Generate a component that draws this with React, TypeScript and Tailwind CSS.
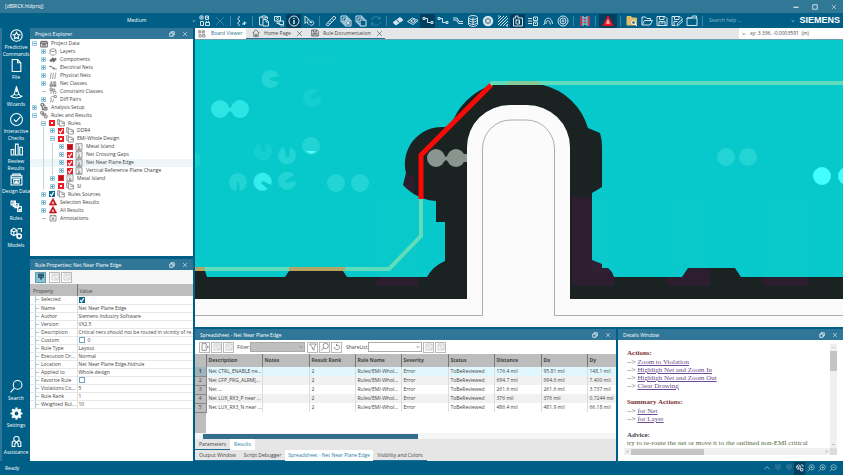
import type { ReactNode } from 'react'
import { clsx } from 'clsx'

const ICONS: Record<string, ReactNode> = {
  parts: <path d="M2 2h6v6H2zM13 2h6v7h-6zM3 13h6v8H3zM13 15h8v6h-8zM4 5h2M15 5h3M15 12v3M19 12v3" />,
  close: <path d="M4 4l16 16M20 4L4 20" />,
  squiggle: <path d="M6 2v3l-3 3 5 4-5 4 3 3v3M14 16h7M17 13v7M12 18h4" />,
  clipboard: <path d="M8 4H3v16h6M16 4h3v4M8 2h8v4H8zM10 9h7l4 4v9H10zM16 9v5h5" />,
  layersearch: <path d="M3 3h12v9H3zM7 7a2 2 0 1 0 4 0 2 2 0 1 0-4 0M8 12v5h5M12 12h9v7h-9zM18 18l4 4M15 22h4" />,
  info: (
    <>
      <circle cx="12" cy="12" r="10" />
      <path d="M12 10v8M12 6v2" strokeWidth="3" />
    </>
  ),
  pick: <path d="M4 2v15l4-4 3 6M4 2l9 8H8M15 13c5-3 8 2 6 5s-6 4-7 1M14 11v4h4" />,
  ruler: <path d="M2 19L18 2l4 4L6 22zM14 7l3 3M10 11l3 3M6 15l3 3" />,
  copyx: <path d="M2 2h12v12H2zM6 6h12v12H6zM10 10h12v12H10zM13 13l6 6M19 13l-6 6" />,
  copy: <path d="M2 2h12v5M2 2v12h5M6 6h12v5M6 6v12h5M10 10h12v12H10z" />,
  refresh: <path d="M3 10C4 3 17 1 20 8V3M20 8h-5M21 14c-2 8-15 9-18 2v5M3 16h5" />,
  eraser: (
    <>
      <path d="M2 15L16 5l6 5L8 20z" fill="currentColor" />
      <path d="M9 10l6 5" stroke="#005f87" />
    </>
  ),
  plane: <path d="M1 13l10-7 11 5-10 8zM7 12l6-3 4 3-5 3z" />,
  net: <path d="M2 5h4v4H2zM6 7h5v8h7M18 13h4v4h-4z" />,
  trace: <path d="M2 6h8l4 7h8M2 10h7l4 7h9" />,
  stack: (
    <>
      <ellipse cx="12" cy="5" rx="9" ry="4" />
      <path d="M3 5v14c2 5 16 5 18 0V5M3 10c2 5 16 5 18 0M3 15c2 5 16 5 18 0M12 5v15" />
    </>
  ),
  via: (
    <>
      <circle cx="12" cy="12" r="8" strokeWidth="5" />
      <circle cx="12" cy="12" r="4" fill="#f0d8c8" stroke="#8fa6ae" />
    </>
  ),
  hatch: <path d="M2 8l6-6M2 14L14 2M2 20L20 2M6 22L22 6M12 22l10-10M18 22l4-4M2 2h3M19 22h3" />,
  label: <path d="M3 6h4V2h5v4h9v16H3zM8 18V9M8 10h7v8H9M12 14h3" />,
  pins: <path d="M2 7h8M2 12h8M2 17h8M13 4h8v7h-8zM13 14h8v7h-8zM16 7h2M16 17h2" />,
  arc: <path d="M3 20c4-1 1-11 6-13s11 0 12 11M8 18c0-7 5-8 7-5s0 5 3 6" />,
  target: (
    <>
      <circle cx="12" cy="12" r="10" />
      <circle cx="12" cy="12" r="6" />
      <circle cx="12" cy="12" r="2" />
    </>
  ),
  redstack: (
    <>
      <path d="M8 2v20M16 2v20M8 6h8M8 12h8M8 18h8" stroke="#c9dbe4" />
      <path d="M4 2v20M20 2v20" stroke="#e2364a" strokeWidth="3" />
      <path d="M9 9h6M9 15h6" stroke="#e2364a" />
    </>
  ),
  warn: (
    <>
      <path d="M12 2l10 19H2z" fill="#e21322" stroke="#e21322" />
      <path d="M12 8l4 9H8z" fill="#fff" stroke="none" />
      <path d="M12 12v3" stroke="#e21322" />
    </>
  ),
  foldersearch: (
    <>
      <path d="M2 3h8l2 3h9v14H2z" fill="#e2bd67" stroke="#e2bd67" />
      <circle cx="15" cy="15" r="4" stroke="#fff" fill="#52798c" />
      <path d="M18 18l4 4" stroke="#fff" />
    </>
  ),
  open: <path d="M2 20V4h7l3 3h7v4M2 20l5-9h16l-5 9z" />,
  save: <path d="M2 3h16l4 4v14H2zM7 3v6h9V3M6 21v-8h12v8M9 16h6" />,
  saveas: <path d="M2 3h16l4 4v3M2 3v18h7M7 3v6h9V3M6 21v-8h7M12 22l1-5 8-7 2 3-8 7z" />,
  folder: <path d="M2 21V6h20v15zM2 6h9l2-4h8v4" />,
  star: (
    <>
      <circle cx="12" cy="12" r="10.5" />
      <path d="M12 6l2 4 4 .6-3 3 .8 4.2L12 16l-3.800 1.800.8-4.200-3-3 4-.6z" />
    </>
  ),
  file: <path d="M4 1h10l6 6v16H4zM14 1v6h6" />,
  wizard: <path d="M2 19c3-1 5-2 6-5l4-13 4 13c1 3 3 4 6 5-5 4-15 4-20 0zM8 15c2 2 6 2 8 0M12 6v5" />,
  check: (
    <>
      <circle cx="12" cy="12" r="11" />
      <path d="M7 12l4 4 8-9" />
    </>
  ),
  chart: <path d="M2 22V12h5v10zM10 22V2h5v20zM18 22V8h5v14z" />,
  data: <path d="M2 5h20v17H2zM2 9h20M5 5V2h14v3M7 12h10v7H7zM10 15h4M10 19v-2h4v2" />,
  rules: <path d="M2 2h8v7H2zM6 9v3h5M9 7h7v7H9zM16 12h5v9h-7v-7M4 5l2 2 3-4M11 10l2 2 3-3M16 17l2 2 3-3" />,
  gearsmall: (
    <>
      <path d="M2 6l5-4 6 4v7l-6 3-5-3zM2 6l5 3 6-3M7 9v7M14 3h7v6" />
      <circle cx="17" cy="17" r="4" strokeWidth="3" />
    </>
  ),
  search: (
    <>
      <circle cx="14" cy="9" r="8" />
      <path d="M8 15l-7 8" />
    </>
  ),
  gear: (
    <>
      <circle cx="12" cy="12" r="6" strokeWidth="5" />
      <path d="M12 1v5M12 18v5M1 12h5M18 12h5M4 4l4 4M16 16l4 4M20 4l-4 4M8 16l-4 4" strokeWidth="4" />
    </>
  ),
  person: <path d="M8 12C2 2 22 2 16 12l4 3v8h-5v-5l-3-3-3 3v5H4v-8zM8 12l4 3 4-3" />,
  // small monochrome glyphs of the explorer tree
  project: <path d="M2 5h20v16H2zM2 10h20M6 2v6M12 2v6M18 2v6M6 14h12M6 18h12" strokeWidth="3" />,
  layers: <path d="M3 6c4-5 14-5 18 0v11c-4 6-14 6-18 0zM3 7c4 5 14 5 18 0" />,
  chip: <path d="M2 14l9-9 4 3-8 9zM11 13l8-7 3 4-9 9z" fill="currentColor" />,
  nets: <path d="M1 7h6l4 6h5M15 10v7M19 15h4" strokeWidth="3" />,
  phys: <path d="M3 21c3-5 0-8 3-13V2M10 21c3-5 0-8 3-13V2M17 21c3-5 0-8 3-13V2" />,
  classes: <path d="M4 21V10l4-6v17M12 21V10l4-6v17M20 21V4M2 16h20" />,
  constraint: <path d="M3 3h6v7H3zM6 10v10M11 6h6v7h-6zM14 13v8M18 12l4 4-4 5" />,
  diff: <path d="M3 21c5 0 3-5 3-11 0-5 3-6 8-6M9 21c4 0 4-4 4-8M15 2h7v6h-7z" />,
  analysis: <path d="M3 2h8v7H3zM7 9v11h5M12 13h9v8h-9zM15 16l4 3M11 5l6 4" strokeWidth="3" />,
  pages: <path d="M7 6V2H2v14h5M7 6h8l2 3h5v12H7zM13 13h9" />,
  rule: <path d="M3 2h18v20H3zM7 6h6M8 10l8 8M16 9l-5 5v5M7 19h10" />,
  note: <path d="M3 5h18v16H3zM7 2v6M17 2v6M8 17l4-7 4 7M9 15h6" />,
  alert: (
    <>
      <path d="M12 1l11 20H1z" fill="#c3151f" stroke="#c3151f" />
      <path d="M8 17l4-8 4 8z" fill="#f5dcdc" stroke="none" />
    </>
  ),
  esp: <path d="M3 3h18M3 8h18M4 13h16M9 18h6M6 3v10M12 3v15M18 3v10" strokeWidth="3" />,
  tree: <path d="M3 3h18v18H3zM7 8h10M7 12h4M13 16h5M12 12v4" />,
  export: <path d="M16 8V2H3v20h13v-6M12 12h10M18 8l4 4-4 4" />,
  funnel: <path d="M2 3h20l-7 10v8l-5-3v-5z" />,
  undo: <path d="M4 12c0 10 16 10 16 1 0-5-4-7-11-7M13 2L9 6l4 4" />,
  home: <path d="M2 12L12 2l10 10M5 10v12h14V10M10 22v-6h4v6" />,
  restore: <path d="M3 8h13v13H3zM8 8V3h13v13h-5" strokeWidth="3" />,
  up: <path d="M4 16l8-8 8 8" />,
  down: <path d="M4 8l8 8 8-8" strokeWidth="4" />,
  zoomin: (
    <>
      <circle cx="14" cy="10" r="8" />
      <path d="M8 16l-6 6M14 6v8M10 10h8" />
    </>
  ),
  zoomout: (
    <>
      <circle cx="14" cy="10" r="8" />
      <path d="M8 16l-6 6M10 10h8" />
    </>
  ),
  square: <path d="M3 3h18v18H3z" strokeWidth="3" />,
  minus: <path d="M2 13h20" strokeWidth="4" />,
}

const Icon = ({ name, className = 'size-[11px]' }: { name: string; className?: string }) => (
  <svg
    viewBox="0 0 24 24"
    fill="none"
    stroke="currentColor"
    strokeWidth="2"
    className={clsx('shrink-0', className)}
    aria-hidden="true"
  >
    {ICONS[name]}
  </svg>
)

interface Tool {
  icon: string
  dim?: boolean
  active?: boolean
}

const TOOLS: (Tool | null)[] = [
  { icon: 'parts' },
  { icon: 'close', dim: true },
  null,
  { icon: 'squiggle' },
  null,
  { icon: 'clipboard' },
  { icon: 'layersearch' },
  { icon: 'info', active: true },
  { icon: 'pick' },
  null,
  { icon: 'ruler' },
  { icon: 'copyx' },
  { icon: 'copy' },
  { icon: 'refresh', dim: true },
  null,
  { icon: 'eraser' },
  { icon: 'plane' },
  { icon: 'net', active: true },
  { icon: 'net' },
  { icon: 'trace' },
  { icon: 'stack' },
  { icon: 'via' },
  { icon: 'hatch' },
  { icon: 'label', active: true },
  { icon: 'pins' },
  { icon: 'arc' },
  { icon: 'target' },
  null,
  { icon: 'redstack' },
  null,
  { icon: 'warn', active: true },
  null,
  { icon: 'foldersearch' },
  { icon: 'open' },
  { icon: 'save' },
  { icon: 'saveas' },
  { icon: 'folder' },
  null,
]

const NAV = [
  { icon: 'star', label: ['Predictive', 'Commands'] },
  { icon: 'file', label: ['File'] },
  { icon: 'wizard', label: ['Wizards'] },
  { icon: 'check', label: ['Interactive', 'Checks'] },
  { icon: 'chart', label: ['Review', 'Results'] },
  { icon: 'data', label: ['Design Data'] },
  { icon: 'rules', label: ['Rules'] },
  { icon: 'gearsmall', label: ['Models'] },
]

const NAV_BOTTOM = [
  { icon: 'search', label: ['Search'] },
  { icon: 'gear', label: ['Settings'] },
  { icon: 'person', label: ['Assistance'] },
]

type Check = 'on' | 'mixed' | 'full' | 'blue'

interface TreeItem {
  level: number
  icon: string
  text: string
  sign?: '+' | '-'
  check?: Check
  selected?: boolean
}

const TREE: TreeItem[] = [
  { level: 0, icon: 'project', text: 'Project Data', sign: '-' },
  { level: 1, icon: 'layers', text: 'Layers', sign: '+' },
  { level: 1, icon: 'chip', text: 'Components', sign: '+' },
  { level: 1, icon: 'nets', text: 'Electrical Nets', sign: '+' },
  { level: 1, icon: 'phys', text: 'Physical Nets', sign: '+' },
  { level: 1, icon: 'classes', text: 'Net Classes', sign: '+' },
  { level: 1, icon: 'constraint', text: 'Constraint Classes' },
  { level: 1, icon: 'diff', text: 'Diff Pairs', sign: '+' },
  { level: 0, icon: 'analysis', text: 'Analysis Setup', sign: '+' },
  { level: 0, icon: 'rules', text: 'Rules and Results', sign: '-' },
  { level: 1, icon: 'pages', text: 'Rules', sign: '-', check: 'mixed' },
  { level: 2, icon: 'pages', text: 'DDR4', sign: '+', check: 'on' },
  { level: 2, icon: 'pages', text: 'EMI-Whole Design', sign: '-', check: 'mixed' },
  { level: 3, icon: 'rule', text: 'Metal Island', sign: '+', check: 'full' },
  { level: 3, icon: 'rule', text: 'Net Crossing Gaps', sign: '+', check: 'on' },
  { level: 3, icon: 'rule', text: 'Net Near Plane Edge', sign: '+', check: 'on', selected: true },
  { level: 3, icon: 'rule', text: 'Vertical Reference Plane Change', sign: '+', check: 'on' },
  { level: 2, icon: 'rule', text: 'Metal Island', sign: '+', check: 'full' },
  { level: 2, icon: 'pages', text: 'SI', sign: '+', check: 'mixed' },
  { level: 1, icon: 'pages', text: 'Rules Sources', sign: '+', check: 'blue' },
  { level: 1, icon: 'alert', text: 'Selection Results', sign: '+' },
  { level: 1, icon: 'alert', text: 'All Results', sign: '+' },
  { level: 1, icon: 'note', text: 'Annotations' },
]

const PROPERTIES: { name: string; value: string; box?: 'on' | 'off' }[] = [
  { name: 'Selected', value: '', box: 'on' },
  { name: 'Name', value: 'Net Near Plane Edge' },
  { name: 'Author', value: 'Siemens Industry Software' },
  { name: 'Version', value: 'VX2.5' },
  { name: 'Description', value: 'Critical nets should not be routed in vicinity of re...' },
  { name: 'Custom', value: '0', box: 'off' },
  { name: 'Rule Type', value: 'Layout' },
  { name: 'Execution Or...', value: 'Normal' },
  { name: 'Location', value: 'Net Near Plane Edge.hldrule' },
  { name: 'Applied to', value: 'Whole design' },
  { name: 'Favorite Rule', value: '', box: 'off' },
  { name: 'Violations Co...', value: '5' },
  { name: 'Rule Rank', value: '1' },
  { name: 'Weighted Rul...', value: '10' },
]

const COLUMNS = ['Description', 'Notes', 'Result Rank', 'Rule Name', 'Severity', 'Status', 'Distance', 'Dx', 'Dy']

const ROWS = [
  ['Net CTRL_ENABLE ne...', '176.4 mil', '95.81 mil', '148.1 mil'],
  ['Net CFP_PRG_ALRM[...', '694.7 mil', '694.6 mil', '7.400 mil'],
  ['Net ...', '261.6 mil', '261.6 mil', '3.737 mil'],
  ['Net LUX_RX3_P near ...', '376 mil', '376 mil', '0.7244 mil'],
  ['Net LUX_RX3_N near ...', '486.4 mil', '481.9 mil', '66.18 mil'],
]

const NavButton = ({ icon, label }: { icon: string; label: string[] }) => (
  <button
    className={clsx(
      'flex w-full shrink-0 flex-col items-center whitespace-nowrap text-[5px] leading-[7px] text-white',
      label.length > 1 ? 'h-[30px]' : 'h-[27px]',
    )}
  >
    <Icon name={icon} className="mb-[2px] size-[13px]" />
    {label.map((line) => (
      <span key={line}>{line}</span>
    ))}
  </button>
)

const PanelHeader = ({ title }: { title: string }) => (
  <header className="flex h-[11px] shrink-0 items-center bg-[#2f7698] px-[5px] pt-px text-white">
    <h2 className="flex-1 truncate">{title}</h2>
    <button aria-label="Restore" className="mr-[7px]">
      <Icon name="restore" className="size-[6px]" />
    </button>
    <button aria-label="Close">
      <Icon name="close" className="size-[6px]" />
    </button>
  </header>
)

const CheckBox = ({ kind, label }: { kind: Check | 'off'; label: string }) => (
  <span className="relative flex size-[6px] shrink-0">
    <input
      type="checkbox"
      aria-label={label}
      defaultChecked={kind !== 'off'}
      className={clsx(
        'size-[6px] appearance-none border',
        kind === 'off' && 'border-[#6aa5c0] bg-white',
        kind === 'blue' && 'border-[#0a6590] bg-[#0a6590]',
        kind === 'full' && 'border-[#e8232e] bg-[#b8101a]',
        kind === 'on' && 'border-[#ee1a26] bg-[#ee1a26]',
        kind === 'mixed' && 'border-2 border-[#ee1a26] bg-white',
      )}
    />
    {(kind === 'on' || kind === 'blue') && (
      <svg viewBox="0 0 10 10" className="pointer-events-none absolute inset-0" aria-hidden="true">
        <path d="M2 5l2 3 4-6" fill="none" stroke="#fff" strokeWidth="2" />
      </svg>
    )}
  </span>
)

const TreeRow = ({ level, icon, text, sign, check, selected }: TreeItem) => (
  <li className={clsx('flex min-h-0 items-center', selected && 'bg-[#eef5f8]')}>
    {Array.from({ length: level }, (_, i) => (
      <span key={i} className="flex h-full w-[9px] shrink-0 justify-center">
        {i > 0 && <span className="h-full w-px bg-[#bcd7e2]" />}
      </span>
    ))}
    <span className="flex w-[9px] shrink-0 items-center justify-center">
      {sign ? (
        <button aria-label={sign === '+' ? 'Expand' : 'Collapse'} className="text-[#5fa6c4]">
          <svg viewBox="0 0 5 5" className="size-[5px]" fill="none" stroke="currentColor">
            <path d="M.5.5h4v4h-4z" strokeOpacity=".6" />
            <path d="M1 2.500h3" />
            {sign === '+' && <path d="M2.500 1v3" />}
          </svg>
        </button>
      ) : (
        <span className="h-px w-[4px] bg-[#9fc3d2]" />
      )}
    </span>
    {check && (
      <span className="flex w-[8px] shrink-0 justify-center">
        <CheckBox kind={check} label={text} />
      </span>
    )}
    <span className="flex w-[10px] shrink-0 justify-center text-[#666]">
      <Icon name={icon} className="size-[8px]" />
    </span>
    <span className="ml-[2px] whitespace-nowrap">{text}</span>
  </li>
)

const ToolButton = ({ icon, dim, active, label }: Tool & { label: string }) => (
  <button
    aria-label={label}
    className={clsx(
      'flex h-[11px] w-[11px] shrink-0 items-center justify-center border',
      active ? 'border-[#5f9fb5] bg-[#8cc3d3] text-[#1d4a5c]' : 'border-[#b9b9b9] bg-white',
      !active && (dim ? 'text-[#b0b0b0]' : 'text-[#666]'),
    )}
  >
    <Icon name={icon} className="size-[8px]" />
  </button>
)

const BoardCanvas = () => (
  <svg
    viewBox="1 0 648 287"
    preserveAspectRatio="xMidYMid slice"
    className="block min-h-0 w-full flex-1 bg-[#fbfbfb]"
    role="img"
    aria-label="Board layout"
  >
    <path
      d="M0 0H649V259H376V107A43 42 0 0 0 333 65H316A43 42 0 0 0 273 107V259H0Z"
      fill="#1b2222"
    />
    <path
      d="M378 157h20v63l10 4 6 4 6 9v9h-42zM473 237h15l6-9h22v18h-43zM569 237h45v9h-45zM186 237h38v9h-44zM212 133l8 4v17l-10-8z"
      fill="#2c1e30"
    />
    <path
      d="M0 0H649V237H547L541 228H494L488 237H420Q418 231 414 228H408V224L398 220V153L408 147V107Q408 99 406 93L394 88A62 62 0 0 0 349 45H299A62 62 0 0 0 257 86L250 87A37 37 0 0 0 212 133L209 145A50 50 0 0 0 242 161V182H251V221Q239 226 233 237H153L149 231H95L91 237H13L11 231H0Z"
      fill="#07c9cb"
    />
    <g fill="#fff" opacity=".015">
      <path d="M180 158h46v78h-46zM398 158h20v74h-20zM474 158h40v70h-40zM570 158h44v79h-44zM110 12h32v12h-32z" />
    </g>
    <g fill="#2ce5e4">
      <circle cx="26" cy="69" r="9" />
      <circle cx="46" cy="69" r="9" />
      <path d="M32 65l4 3 4-3v8l-4-2-4 2z" />
    </g>
    <g fill="#40dfde" opacity=".5">
      <path d="M85 36A9 9 0 1 0 85 42L76 40V38z" />
      <path d="M90 107A9 9 0 1 0 96 107L95 117H92z" />
      <path d="M42 151A9 9 0 1 1 46 151L45 142H43z" />
      <path d="M100 135A9 9 0 1 0 102 141L92 143 91 141z" />
      <circle cx="117" cy="106" r="9" />
      <circle cx="142" cy="143" r="9" />
      <circle cx="166" cy="143" r="9" />
      <circle cx="532" cy="117" r="9" />
      <circle cx="554" cy="117" r="9" />
    </g>
    <g fill="#40dfde" opacity=".25">
      <path d="M66 103A9 9 0 1 0 72 103L71 112H68z" />
      <path d="M124 51A9 9 0 1 0 127 56L117 59 116 57z" />
      <circle cx="-2" cy="120" r="9" />
    </g>
    <path d="M112 111h10q-5 5-10 0z" fill="#5ff" />
    <path d="M74 149A9 9 0 1 1 77 145L69 141 67 143z" fill="#35ebeb" />
    <circle cx="628" cy="136" r="9" fill="#43ffff" />
    <circle cx="653" cy="136" r="9" fill="#43ffff" />
    <g fill="none" strokeWidth="4">
      <path d="M0 229H195L227 196V158M295 46l3-3H649" stroke="#5fdcb9" />
      <path d="M0 229H11M95 229H151" stroke="#b4a765" />
      <path d="M314 43H346" stroke="#86c898" />
      <path d="M227 159V115L297 45" stroke="#f90a06" strokeWidth="5" />
    </g>
    <g fill="#8a958f">
      <circle cx="242" cy="118" r="9" />
      <circle cx="262" cy="118" r="9" />
      <path d="M248 114l4 3 4-3v9l-4-3-4 3zM266 114h7v8h-7z" />
    </g>
    <path
      d="M0 275.500H288.500V109A28 29 0 0 1 317 80H332A28 29 0 0 1 360.500 109V275.500H649"
      fill="none"
      stroke="#999"
      strokeWidth=".8"
    />
  </svg>
)

const ProjectExplorer = () => (
  <section className="flex h-[228px] shrink-0 flex-col bg-white">
    <PanelHeader title="Project Explorer" />
    <ul className="mt-px grid h-[182px] auto-rows-fr">
      {TREE.map((item, i) => (
        <TreeRow key={i} {...item} />
      ))}
    </ul>
  </section>
)

const RuleProperties = () => (
  <section className="flex min-h-0 flex-1 flex-col bg-white">
    <PanelHeader title="Rule Properties: Net Near Plane Edge" />
    <div className="flex h-[14px] shrink-0 items-center gap-px bg-[#f6f6f6] px-[5px]">
      <ToolButton icon="esp" label="Show all" active />
      <span className="w-px" />
      <ToolButton icon="tree" label="Expand all" dim />
      <ToolButton icon="tree" label="Collapse all" dim />
    </div>
    <table className="w-full table-fixed border-collapse text-left">
      <thead>
        <tr className="h-[12px] bg-[#bdbdbd]">
          <th className="w-[47px] border-r border-[#777] pt-[3px] pl-[3px] font-normal">Property</th>
          <th className="pt-[3px] pl-[2px] font-normal">Value</th>
        </tr>
      </thead>
      <tbody>
        {PROPERTIES.map(({ name, value, box }) => (
          <tr key={name} className="h-[8px] border-b border-[#e8e8e8]">
            <td className="border-r border-[#e0e0e0] p-0">
              <div className="ml-[5px] flex h-[7px] items-center gap-[2px] border-l border-[#a9cad9]">
                <span className="h-px w-[3px] bg-[#a9cad9]" />
                <span className="whitespace-nowrap">{name}</span>
              </div>
            </td>
            <td className="p-0">
              <div className="flex h-[7px] items-center gap-[3px] pl-px whitespace-nowrap">
                {box && <CheckBox kind={box === 'on' ? 'blue' : 'off'} label={name} />}
                {value}
              </div>
            </td>
          </tr>
        ))}
      </tbody>
    </table>
  </section>
)

const ViewerTabs = () => (
  <div className="flex h-[12px] shrink-0 border-b border-[#6b9db3] bg-[#e4e6e7]">
    <button className="flex w-[51px] items-center gap-[5px] bg-white pl-[3px] whitespace-nowrap text-[#2d6d8c]">
      <Icon name="parts" className="size-[8px] text-[#666]" />
      Board Viewer
    </button>
    <div className="flex items-center border-b border-[#1b6f93] text-[#444]">
      <button className="flex w-[50px] items-center gap-[4px] pl-[6px] whitespace-nowrap">
        <Icon name="home" className="size-[8px]" />
        Home Page
      </button>
      <button aria-label="Close Home Page" className="w-[9px]">
        <Icon name="close" className="size-[7px]" />
      </button>
      <button className="flex w-[71px] items-center gap-[4px] pl-[6px] whitespace-nowrap">
        <Icon name="save" className="size-[8px]" />
        Rule Documentation
      </button>
      <button aria-label="Close Rule Documentation" className="w-[9px]">
        <Icon name="close" className="size-[7px]" />
      </button>
    </div>
    <div className="ml-auto flex w-[104px] items-center gap-[4px] bg-white pl-[3px] text-[#444]">
      <Icon name="down" className="size-[4px]" />
      <output className="whitespace-nowrap">xy: 3.336, -0.0003591&nbsp; (in)</output>
    </div>
  </div>
)

const Spreadsheet = () => (
  <section className="flex min-w-0 flex-1 flex-col bg-white">
    <PanelHeader title="Spreadsheet - Net Near Plane Edge" />
    <div className="flex h-[14px] shrink-0 items-center gap-px px-[4px]">
      <ToolButton icon="export" label="Export" />
      <ToolButton icon="tree" label="Expand rows" dim />
      <ToolButton icon="tree" label="Collapse rows" dim />
      <label htmlFor="filter" className="ml-[2px] w-[12px]">
        Filter:
      </label>
      <span className="relative mr-px flex w-[55px] items-center">
        <select id="filter" className="h-[10px] w-full appearance-none border border-[#aaa] bg-[#bfbfbf]">
          <option></option>
        </select>
        <Icon name="down" className="pointer-events-none absolute right-[2px] size-[4px] text-[#777]" />
      </span>
      <ToolButton icon="funnel" label="Filter" />
      <ToolButton icon="search" label="Find" />
      <ToolButton icon="undo" label="Reset" />
      <label htmlFor="share" className="ml-[3px] w-[21px]">
        ShareList:
      </label>
      <span className="relative flex w-[54px] items-center">
        <select id="share" className="h-[10px] w-full appearance-none border border-[#aaa] bg-white">
          <option></option>
        </select>
        <Icon name="down" className="pointer-events-none absolute right-[2px] size-[4px] text-[#555]" />
      </span>
      <ToolButton icon="tree" label="Add to list" dim />
      <ToolButton icon="tree" label="Edit list" dim />
    </div>
    <div className="min-h-0 flex-1 bg-[linear-gradient(to_right,#bdbdbd_11px,#fff_11px)]">
      <table className="w-full table-fixed border-collapse text-left whitespace-nowrap">
        <colgroup>
          <col className="w-[11px]" />
          <col className="w-[56px]" />
          <col className="w-[47px]" />
          <col className="w-[46px]" />
          <col className="w-[46px]" />
          <col className="w-[47px]" />
          <col className="w-[46px]" />
          <col className="w-[47px]" />
          <col className="w-[46px]" />
          <col />
        </colgroup>
        <thead>
          <tr className="h-[13px] bg-[#bdbdbd]">
            <th className="border-r border-[#777] p-0" aria-label="Row" />
            {COLUMNS.map((name) => (
              <th key={name} className="overflow-hidden border-r border-[#777] p-0 pl-[2px] font-bold last:border-r-0">
                {name}
              </th>
            ))}
          </tr>
        </thead>
        <tbody>
          {ROWS.map(([description, distance, dx, dy], i) => (
            <tr key={description} className={clsx('h-[9px]', i === 0 ? 'bg-[#e0f8fd]' : i % 2 ? 'bg-[#f1f1f1]' : 'bg-white')}>
              <th
                className={clsx(
                  'border-r border-b border-[#888] p-0 text-center',
                  i === 0 ? 'bg-[#9fb3bd] font-bold' : 'bg-[#bdbdbd] font-normal',
                )}
              >
                {i + 1}
              </th>
              {[description, '', '2', 'Rules/EMI-Whol...', 'Error', 'ToBeReviewed', distance, dx, dy].map((cell, j) => (
                <td key={j} className="border-r border-[#dcdcdc] p-0 pl-[2px] last:border-r-0">
                  {cell}
                </td>
              ))}
            </tr>
          ))}
        </tbody>
      </table>
    </div>
    <div className="flex h-[6px] shrink-0 items-center bg-[#f5f5f5] px-[8px]">
      <div className="h-[5px] w-[53%] bg-[#336f8d]" />
    </div>
    <div className="flex h-[11px] shrink-0 bg-[#e6e6e6]">
      <button className="border-b border-[#1b6f93] px-[4px]">Parameters</button>
      <button className="bg-white px-[4px] text-[#2a7da3]">Results</button>
    </div>
    <div className="flex h-[11px] shrink-0 bg-[#e6e6e6] whitespace-nowrap">
      <button className="w-[45px] border-b border-[#1b6f93]">Output Window</button>
      <button className="w-[45px] border-b border-[#1b6f93]">Script Debugger</button>
      <button className="w-[88px] bg-white text-[#2a7da3]">Spreadsheet - Net Near Plane Edge</button>
      <button className="w-[54px] border-b border-[#1b6f93]">Visibility and Colors</button>
    </div>
  </section>
)

const ActionLink = ({ children }: { children: string }) => (
  <li>
    --&gt;{' '}
    <a href="#" className="text-[#6a4a90] underline">
      {children}
    </a>
  </li>
)

const DetailsWindow = () => (
  <section className="flex w-[225px] shrink-0 flex-col bg-white">
    <PanelHeader title="Details Window" />
    <div className="mx-[6px] mt-[4px] mb-[6px] flex min-h-0 flex-1 flex-col">
      <div className="flex min-h-0 flex-1">
        <div className="min-w-0 flex-1 pt-[5px] pl-[3px] font-['Liberation_Serif',serif] text-[7px] leading-[8px] whitespace-nowrap text-[#555]">
          <h3 className="mb-px font-bold text-[#7b2f2f]">Actions:</h3>
          <ul>
            <ActionLink>Zoom to Violation</ActionLink>
            <ActionLink>Highligh Net and Zoom In</ActionLink>
            <ActionLink>Highligh Net and Zoom Out</ActionLink>
            <ActionLink>Clear Drawing</ActionLink>
          </ul>
          <h3 className="mt-[8px] mb-px font-bold text-[#7b2f2f]">Summary Actions:</h3>
          <ul>
            <ActionLink>for Net</ActionLink>
            <ActionLink>for Layer</ActionLink>
          </ul>
          <h3 className="mt-[8px] font-bold text-[#444]">Advice:</h3>
          <p className="text-[#55693f]">try to re-route the net or move it to the outlined non-EMI critical</p>
        </div>
        <div className="flex w-[7px] flex-col items-center bg-[#f0f0f0] text-[#444]">
          <Icon name="up" className="my-[2px] size-[3px]" />
          <div className="h-[20px] w-full bg-[#c4c4c4]" />
          <Icon name="down" className="mt-auto mb-[2px] size-[3px]" />
        </div>
      </div>
      <div className="flex h-[7px] shrink-0 items-center bg-[#f0f0f0] text-[#444]">
        <Icon name="down" className="mx-[2px] size-[3px] rotate-90" />
        <div className="h-[6px] w-[73px] bg-[#c4c4c4]" />
        <Icon name="down" className="mr-[2px] ml-auto size-[3px] -rotate-90" />
        <span className="h-full w-[7px] bg-[#dcdcdc]" />
      </div>
    </div>
  </section>
)

export default function App() {
  return (
    <div className="flex h-screen w-full flex-col overflow-hidden bg-[#005f87] font-['Open_Sans','Noto_Sans',sans-serif] text-[5px] leading-[7px] text-[#444]">
      <header className="flex h-[13px] shrink-0 items-center bg-[#317897] pr-[6px] pl-[5px] text-white">
        <h1 className="flex-1">[dBRICK.hldproj]</h1>
        <button aria-label="Minimize" className="mr-[13px]">
          <Icon name="minus" className="size-[6px]" />
        </button>
        <button aria-label="Maximize" className="mr-[13px]">
          <Icon name="square" className="size-[6px]" />
        </button>
        <button aria-label="Close">
          <Icon name="close" className="size-[6px]" />
        </button>
      </header>

      <div className="flex h-[15px] shrink-0 items-center pl-[127px] text-[#d5e4ec]">
        <span className="relative flex w-[70px] shrink-0 items-center">
          <select aria-label="Detail level" className="w-full appearance-none text-[5px] text-white">
            <option>Medium</option>
          </select>
          <Icon name="down" className="pointer-events-none absolute right-px size-[4px]" />
        </span>
        {TOOLS.map((tool, i) =>
          tool ? (
            <button
              key={i}
              aria-label={tool.icon}
              className={clsx(
                'flex h-[14px] shrink-0 items-center justify-center',
                tool.icon === 'warn' ? 'w-[18px]' : 'w-[15px]',
                tool.active && 'bg-[#003f5e]',
                tool.dim && 'text-[#3d83a3]',
              )}
            >
              <Icon name={tool.icon} className="size-[12px]" />
            </button>
          ) : (
            <span key={i} className="mx-[3px] h-[10px] w-px shrink-0 bg-[#3f86a5]" />
          ),
        )}
        <input
          type="search"
          aria-label="Search help"
          placeholder="Search help ..."
          className="ml-[3px] min-w-0 flex-1 bg-transparent placeholder:text-[#8db6c9]"
        />
        <Icon name="down" className="mr-[4px] size-[4px]" />
        <span className="mr-[3px] font-['Liberation_Sans',sans-serif] text-[9px] font-bold text-white">SIEMENS</span>
      </div>

      <div className="flex min-h-0 flex-1">
        <nav className="flex w-[30px] shrink-0 flex-col border-l-2 border-[#2f7698] pt-px">
          {NAV.map((item) => (
            <NavButton key={item.label[0]} {...item} />
          ))}
          <div className="mt-auto">
            {NAV_BOTTOM.map((item) => (
              <NavButton key={item.label[0]} {...item} />
            ))}
          </div>
        </nav>

        <div className="flex w-[163px] shrink-0 flex-col gap-[3px]">
          <ProjectExplorer />
          <RuleProperties />
        </div>

        <main className="ml-[2px] flex min-w-0 flex-1 flex-col">
          <ViewerTabs />
          <BoardCanvas />
          <div className="mt-[2px] flex h-[132px] shrink-0 gap-[2px]">
            <Spreadsheet />
            <DetailsWindow />
          </div>
        </main>
      </div>

      <footer className="flex h-[14px] shrink-0 items-center px-[5px] text-[#b8d3df]">
        <span className="flex-1 text-white">Ready</span>
        {['up', 'esp', 'esp', 'gearsmall', 'zoomin', 'zoomin', 'zoomout'].map((icon, i) => (
          <button
            key={i}
            aria-label={icon}
            className={clsx(
              'flex h-[13px] w-[11px] items-center justify-center',
              icon === 'esp' && 'text-[#2f7596]',
              icon === 'gearsmall' && 'bg-[#003f5e] text-white',
            )}
          >
            <Icon name={icon} className="size-[8px]" />
          </button>
        ))}
      </footer>
    </div>
  )
}
